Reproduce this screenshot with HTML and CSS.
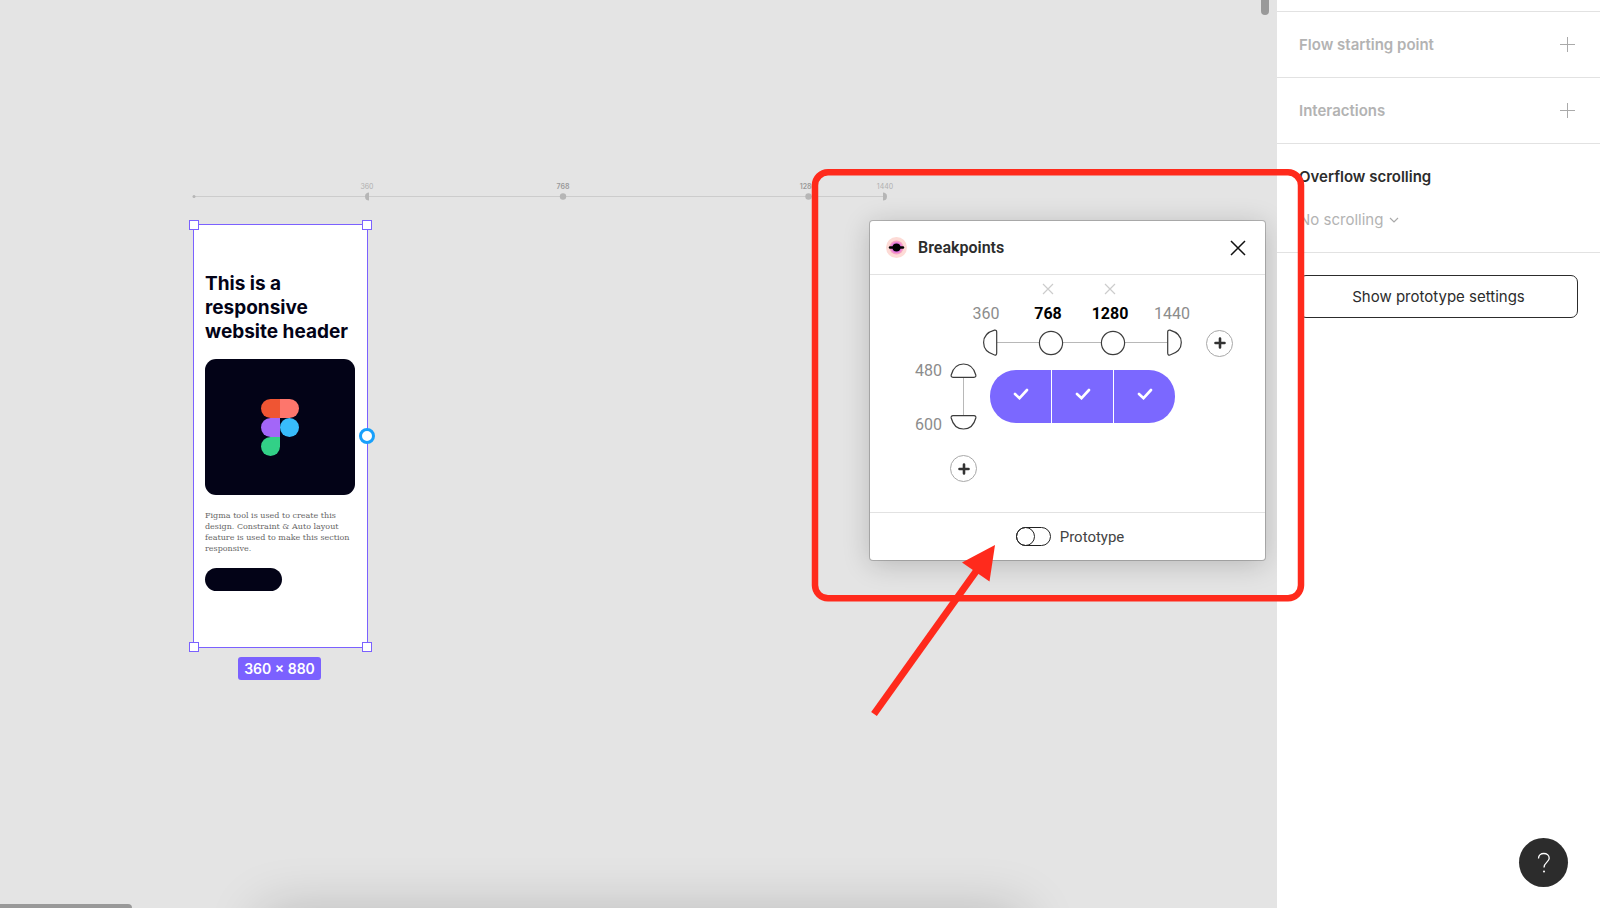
FILE: index.html
```html
<!DOCTYPE html>
<html lang="en">
<head>
<meta charset="utf-8">
<title>Breakpoints</title>
<link rel="stylesheet" href="styles.css">
</head>
<body>
<div class="app">
  <main class="canvas">
    <div class="ruler">
      <svg class="ruler-line" width="696" height="10" viewBox="0 0 696 10" aria-hidden="true">
        <path d="M2 4.500H694" stroke="#cccccc" stroke-width="1"/>
        <g fill="#b6b6b6"><circle cx="2" cy="4.500" r="1.500"/><path d="M177 .5v8c-2 0-4-1-4-4s2-4 4-4z"/><circle cx="371" cy="4.500" r="3.200"/><circle cx="616.500" cy="4.500" r="3.200"/><path d="M691 .5v8c2 0 4-1 4-4s-2-4-4-4z"/></g>
      </svg>
      <span class="tick tick-360">360</span>
      <span class="tick tick-768 tick-strong">768</span>
      <span class="tick tick-1280 tick-strong">1280</span>
      <span class="tick tick-1440">1440</span>
    </div>

    <article class="artboard">
      <h1 class="artboard-title">This is a responsive website header</h1>
      <div class="artboard-media">
        <svg width="38" height="57" viewBox="0 0 38 57" aria-hidden="true">
          <path d="M9.500 0H19v19H9.500a9.500 9.500 0 0 1 0-19z" fill="#ef5533"/>
          <path d="M19 0h9.500a9.500 9.500 0 0 1 0 19H19z" fill="#fd766c"/>
          <path d="M9.500 19H19v19H9.500a9.500 9.500 0 0 1 0-19z" fill="#a366f8"/>
          <circle cx="28.500" cy="28.500" r="9.500" fill="#38bcfb"/>
          <path d="M9.500 38H19v9.500a9.500 9.500 0 1 1-9.500-9.500z" fill="#32d087"/>
        </svg>
      </div>
      <p class="artboard-text">Figma tool is used to create this<br>design. Constraint &amp; Auto layout<br>feature is used to make this section<br>responsive.</p>
      <div class="artboard-pill"></div>
      <span class="handle handle-tl"></span>
      <span class="handle handle-tr"></span>
      <span class="handle handle-bl"></span>
      <span class="handle handle-br"></span>
      <span class="connector"></span>
      <span class="size-badge">360 × 880</span>
    </article>

    <section class="panel">
      <header class="panel-header">
        <svg width="22" height="22" viewBox="0 0 22 22" aria-hidden="true">
          <circle cx="10.500" cy="10.500" r="10.500" fill="#fddbd6"/>
          <circle cx="10.500" cy="10.500" r="7" fill="#f5a0c4"/>
          <circle cx="10.500" cy="10.500" r="5.500" fill="#e678df"/>
          <circle cx="10.500" cy="10.500" r="4" fill="#000"/>
          <path d="M4 10.500h13" stroke="#000" stroke-width="2.400" stroke-linecap="round"/>
        </svg>
        <h2 class="panel-title">Breakpoints</h2>
        <button class="icon-button panel-close" aria-label="Close">
          <svg width="16" height="16" viewBox="0 0 16 16"><path d="M1 1l14 14M15 1L1 15" stroke="#111" stroke-width="1.500"/></svg>
        </button>
      </header>
      <div class="panel-body">
        <div class="columns">
          <div class="column"><span class="value">360</span></div>
          <div class="column">
            <button class="icon-button remove" aria-label="Remove 768"><svg width="12" height="12" viewBox="0 0 12 12"><path d="M1 1l10 10M11 1L1 11" stroke="#cccccc" stroke-width="1.200"/></svg></button>
            <span class="value value-strong">768</span>
          </div>
          <div class="column">
            <button class="icon-button remove" aria-label="Remove 1280"><svg width="12" height="12" viewBox="0 0 12 12"><path d="M1 1l10 10M11 1L1 11" stroke="#cccccc" stroke-width="1.200"/></svg></button>
            <span class="value value-strong">1280</span>
          </div>
          <div class="column"><span class="value">1440</span></div>
        </div>
        <div class="width-rail">
          <svg width="200" height="28" viewBox="0 0 200 28" aria-hidden="true">
            <path d="M14 13.500H185" stroke="#b8b8b8"/>
            <g fill="#fff" stroke="#3c3c3c" stroke-width="1.200">
              <path d="M11.500 1.200Q13.700 .8 13.700 3V24Q13.700 26.400 11.500 26C4.500 24 .6 19.500 .6 13.600S4.500 3.200 11.500 1.200z"/>
              <circle cx="68" cy="14" r="11.600"/><circle cx="130" cy="14" r="11.600"/>
              <path d="M187 1.200Q184.700 .8 184.700 3V24Q184.700 26.400 187 26C194 24 198.300 19.500 198.300 13.600S194 3.200 187 1.200z"/>
            </g>
          </svg>
          <button class="add" aria-label="Add width"><svg width="12" height="12" viewBox="0 0 12 12"><path d="M6 1.500v9M1.500 6h9" stroke="#333" stroke-width="2.600" stroke-linecap="round"/></svg></button>
        </div>
        <div class="matrix">
          <div class="row-values"><span class="value">480</span><span class="value">600</span></div>
          <svg width="27" height="69" viewBox="0 0 27 69" aria-hidden="true">
            <path d="M13.500 14V55" stroke="#b8b8b8"/>
            <g fill="#fff" stroke="#3c3c3c" stroke-width="1.200">
              <path d="M1.200 12Q.7 14.300 3 14.300H24Q26.300 14.300 25.800 12C24 5 19.500 1 13.500 1S3 5 1.200 12z"/>
              <path d="M1.200 55Q.7 52.700 3 52.700H24Q26.300 52.700 25.800 55C24 62 19.500 66 13.500 66S3 62 1.200 55z"/>
            </g>
          </svg>
          <div class="cells">
            <button class="cell" aria-label="360 to 768"><svg width="16" height="12" viewBox="0 0 16 12"><path d="M2 6l4.500 4.200L14 2" fill="none" stroke="#fff" stroke-width="2.600" stroke-linecap="round"/></svg></button>
            <button class="cell" aria-label="768 to 1280"><svg width="16" height="12" viewBox="0 0 16 12"><path d="M2 6l4.500 4.200L14 2" fill="none" stroke="#fff" stroke-width="2.600" stroke-linecap="round"/></svg></button>
            <button class="cell" aria-label="1280 to 1440"><svg width="16" height="12" viewBox="0 0 16 12"><path d="M2 6l4.500 4.200L14 2" fill="none" stroke="#fff" stroke-width="2.600" stroke-linecap="round"/></svg></button>
          </div>
        </div>
        <button class="add add-row" aria-label="Add height"><svg width="12" height="12" viewBox="0 0 12 12"><path d="M6 1.500v9M1.500 6h9" stroke="#333" stroke-width="2.600" stroke-linecap="round"/></svg></button>
      </div>
      <footer class="panel-footer">
        <input class="toggle" type="checkbox" id="prototype">
        <label for="prototype">Prototype</label>
      </footer>
    </section>

    <span class="scroll-y"></span>
    <span class="scroll-x"></span>
    <span class="dock-shadow"></span>
  </main>

  <aside class="sidebar">
    <section class="group group-row">
      <h2 class="group-title">Flow starting point</h2>
      <button class="icon-button" aria-label="Add flow starting point"><svg width="15" height="15" viewBox="0 0 15 15"><path d="M7.500 0v15M0 7.500h15" stroke="#aaaaaa"/></svg></button>
    </section>
    <section class="group group-row">
      <h2 class="group-title">Interactions</h2>
      <button class="icon-button" aria-label="Add interaction"><svg width="15" height="15" viewBox="0 0 15 15"><path d="M7.500 0v15M0 7.500h15" stroke="#aaaaaa"/></svg></button>
    </section>
    <section class="group group-overflow">
      <h2 class="group-title group-title-dark"><label for="overflow">Overflow scrolling</label></h2>
      <div class="select-wrap">
        <select class="select" id="overflow"><option>No scrolling</option></select>
        <svg width="10" height="6" viewBox="0 0 10 6" aria-hidden="true"><path d="M1 1l4 4 4-4" fill="none" stroke="#aaaaaa" stroke-width="1.200"/></svg>
      </div>
    </section>
    <div class="settings"><button class="settings-button">Show prototype settings</button></div>
    <button class="help" aria-label="Help">
      <svg width="14" height="22" viewBox="0 0 14 22"><path d="M1.500 6.500C1.500 3 4 1.500 6.800 1.500c3 0 5.400 1.800 5.400 4.800C12.200 10 7 10.500 7 15.500" fill="none" stroke="#fff" stroke-width="1.300"/><circle cx="7" cy="19.500" r="1" fill="#fff"/></svg>
    </button>
  </aside>

  <svg class="annotation" width="500" height="560" viewBox="0 0 500 560" aria-hidden="true">
    <rect x="7" y="6.300" width="486" height="426" rx="13" fill="none" stroke="#ff2a1c" stroke-width="6.500"/>
    <path d="M66 548L174 397" stroke="#ff2a1c" stroke-width="7"/>
    <path d="M187 379L154 396.500 181.500 415.500z" fill="#ff2a1c"/>
  </svg>
</div>
</body>
</html>
```
FILE: styles.css
```css
* { box-sizing: border-box; }

body {
  margin: 0;
  font-family: Inter, "Liberation Sans", sans-serif;
  font-size: 15px;
  color: #2c2c2c;
}

h1, h2, p { margin: 0; }

button {
  padding: 0;
  border: 0;
  background: none;
  font: inherit;
  color: inherit;
}

svg { display: block; flex: none; }

.app {
  position: relative;
  display: flex;
  min-height: 100vh;
  overflow: hidden;
}

/* Canvas */
.canvas {
  position: relative;
  flex: 1;
  overflow: hidden;
  background: #e4e4e4;
}

.ruler { position: absolute; left: 192px; top: 192px; }

.tick {
  position: absolute;
  top: -10px;
  width: 30px;
  text-align: center;
  font-size: 7px;
  line-height: 10px;
  color: #b0b0b0;
}
.tick-strong { font-weight: 600; color: #999999; }
.tick-360 { left: 160px; }
.tick-768 { left: 356px; }
.tick-1280 { left: 601px; }
.tick-1440 { left: 678px; }

.artboard {
  position: absolute;
  left: 193px;
  top: 224px;
  width: 175px;
  padding: 47px 11px 56px;
  border: 1px solid #7b61ff;
  background: #fff;
}
.artboard-title {
  font-size: 19px;
  line-height: 24px;
  font-weight: 700;
  color: #030317;
}
.artboard-media {
  display: flex;
  align-items: center;
  justify-content: center;
  width: 150px;
  height: 136px;
  margin-top: 15px;
  border-radius: 11px;
  background: #030317;
}
.artboard-text {
  margin-top: 15px;
  font-family: "DejaVu Serif", serif;
  font-size: 8px;
  line-height: 11px;
  white-space: nowrap;
  color: #666666;
}
.artboard-pill {
  width: 77px;
  height: 23px;
  margin-top: 14px;
  border-radius: 12px;
  background: #030317;
}
.handle {
  position: absolute;
  width: 10px;
  height: 10px;
  border: 1px solid #7b61ff;
  background: #fff;
}
.handle-tl { left: -5px; top: -5px; }
.handle-tr { right: -5px; top: -5px; }
.handle-bl { left: -5px; bottom: -5px; }
.handle-br { right: -5px; bottom: -5px; }
.connector {
  position: absolute;
  right: -8px;
  top: 203px;
  width: 16px;
  height: 16px;
  border: 3px solid #18a0fb;
  border-radius: 50%;
  background: #fff;
}
.size-badge {
  position: absolute;
  left: 44px;
  top: 432px;
  width: 83px;
  border-radius: 3px;
  background: #7b61ff;
  color: #fff;
  font-size: 14px;
  font-weight: 600;
  line-height: 23px;
  text-align: center;
  white-space: nowrap;
}

/* Plugin window */
.panel {
  position: absolute;
  left: 870px;
  top: 221px;
  width: 395px;
  border-radius: 3px;
  background: #fff;
  box-shadow: 0 0 0 1px rgba(0, 0, 0, 0.2), 0 4px 28px rgba(0, 0, 0, 0.2);
  font-family: Roboto, "Liberation Sans", sans-serif;
}
.panel-header {
  display: flex;
  align-items: center;
  height: 54px;
  padding: 0 17px 0 16px;
  border-bottom: 1px solid #e2e2e2;
}
.panel-title { margin-left: 10px; font-size: 16px; font-weight: 600; }
.icon-button { display: block; }
.panel-close { margin-left: auto; margin-right: 2px; }

.panel-body { padding: 1px 0 30px; }
.columns {
  display: grid;
  grid-template-columns: repeat(4, 62px);
  margin-left: 85px;
}
.column {
  display: flex;
  flex-direction: column;
  align-items: center;
  justify-content: flex-end;
  gap: 8px;
  height: 49px;
}
.value {
  font-size: 16px;
  line-height: 22px;
  color: #8c8c8c;
}
.value-strong { font-weight: 700; color: #000; }

.width-rail {
  display: flex;
  align-items: center;
  gap: 23px;
  margin: 4px 0 0 113px;
}
.add {
  display: flex;
  align-items: center;
  justify-content: center;
  width: 27px;
  height: 27px;
  border: 1px solid #a8a8a8;
  border-radius: 50%;
  background: #fff;
}
.matrix {
  display: flex;
  align-items: center;
  margin: 1px 0 0 45px;
}
.row-values {
  display: flex;
  flex-direction: column;
  gap: 32px;
  width: 35px;
  padding-top: 2px;
}
.cells {
  display: flex;
  gap: 1px;
  margin: 0 0 2px 13px;
  border-radius: 26px;
  overflow: hidden;
}
.cell {
  display: flex;
  justify-content: center;
  width: 61px;
  height: 53px;
  padding-top: 18px;
  background: #7b68ff;
}
.add-row { margin: 19px 0 0 80px; }

.panel-footer {
  display: flex;
  align-items: center;
  justify-content: center;
  gap: 9px;
  height: 48px;
  padding-left: 5px;
  border-top: 1px solid #e2e2e2;
  color: #444444;
}
.toggle {
  appearance: none;
  width: 35px;
  height: 19px;
  margin: 0;
  border: 1px solid #222222;
  border-radius: 10px;
}
.toggle::before {
  content: "";
  display: block;
  box-sizing: border-box;
  width: 19px;
  height: 19px;
  margin: -1px;
  border: 1px solid #222222;
  border-radius: 50%;
}

/* Scroll thumbs and the shadow cast from the dock below */
.scroll-y {
  position: absolute;
  right: 8px;
  top: -20px;
  width: 8px;
  height: 35px;
  border-radius: 4px;
  background: #999999;
}
.scroll-x {
  position: absolute;
  left: -4px;
  bottom: -4px;
  width: 136px;
  height: 8px;
  border-radius: 4px;
  background: #999999;
}
.dock-shadow {
  position: absolute;
  left: 262px;
  right: 254px;
  top: 100%;
  height: 80px;
  box-shadow: 0 4px 56px rgba(0, 0, 0, 0.2);
}

/* Sidebar */
.sidebar {
  position: relative;
  width: 323px;
  padding-top: 11px;
  background: #fff;
}
.group { border-top: 1px solid #e2e2e2; }
.group-row {
  display: flex;
  align-items: center;
  justify-content: space-between;
  height: 66px;
  padding: 0 25px 0 22px;
}
.group-title {
  font-size: 15px;
  line-height: 20px;
  font-weight: 600;
  color: #b3b3b3;
}
.group-title-dark { color: #2c2c2c; }
.group-overflow { padding: 23px 22px 22px; }
.select-wrap {
  display: flex;
  align-items: center;
  gap: 5px;
  margin-top: 23px;
}
.select {
  appearance: none;
  padding: 0;
  border: 0;
  background: none;
  font: inherit;
  line-height: 20px;
  color: #b3b3b3;
}
.settings {
  padding: 22px 22px 0;
  border-top: 1px solid #e2e2e2;
}
.settings-button {
  display: block;
  width: 100%;
  height: 43px;
  border: 1px solid #2c2c2c;
  border-radius: 7px;
}
.help {
  position: absolute;
  right: 32px;
  bottom: 21px;
  display: flex;
  align-items: center;
  justify-content: center;
  width: 49px;
  height: 49px;
  border-radius: 50%;
  background: #2c2c2c;
}

/* Red callout drawn over everything */
.annotation {
  position: absolute;
  left: 808px;
  top: 166px;
  pointer-events: none;
}
```
